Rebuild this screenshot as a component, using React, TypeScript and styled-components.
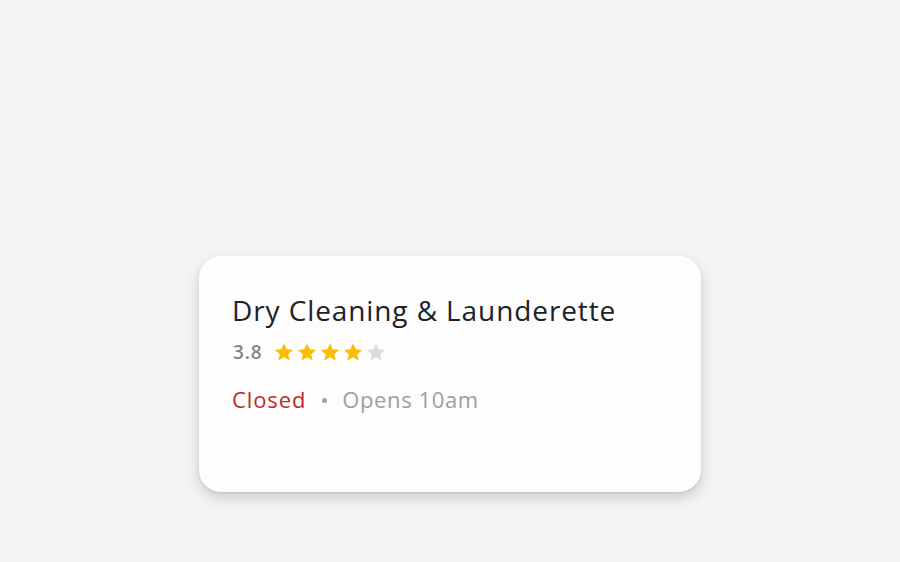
import React from 'react';
import styled, { createGlobalStyle } from 'styled-components';

const GlobalStyle = createGlobalStyle`
  html, body {
    margin: 0;
    background: #f4f4f4;
  }
`;

const Page = styled.main`
  width: 900px;
  height: 562px;
  box-sizing: border-box;
  padding: 256px 0 0 199px;
  font-family: "Open Sans", Roboto, sans-serif;
`;

const Card = styled.section`
  width: 502px;
  height: 236px;
  box-sizing: border-box;
  padding: 34px 33px;
  background: #fdfdfd;
  border-radius: 22px;
  box-shadow: 0 6px 14px rgba(0, 0, 0, 0.17), 0 1px 3px rgba(0, 0, 0, 0.08);
`;

const Title = styled.h1`
  margin: 0;
  font-size: 28px;
  font-weight: 400;
  line-height: 40px;
  letter-spacing: 0.9px;
  color: #202124;
`;

const RatingRow = styled.div`
  display: flex;
  align-items: center;
  gap: 11px;
  margin-top: 10px;
  height: 24px;
`;

const Score = styled.span`
  font-size: 19px;
  font-weight: 600;
  letter-spacing: 0.8px;
  color: #80868b;
  padding-left: 1px;
`;

const Stars = styled.div`
  display: flex;
  gap: 1px;
`;

const StatusRow = styled.div`
  display: flex;
  align-items: center;
  margin-top: 20px;
  font-size: 22px;
  line-height: 30px;
  letter-spacing: 0.6px;
`;

const Status = styled.span<{ $tone: 'closed' | 'muted' }>`
  color: ${p => (p.$tone === 'closed' ? '#bf2a25' : '#9aa0a6')};
  letter-spacing: ${p => (p.$tone === 'closed' ? '0.9px' : '0.6px')};
`;

const Dot = styled.span`
  width: 5px;
  height: 5px;
  border-radius: 50%;
  background: #9aa0a6;
  margin: 2px 15px 0 16px;
`;

const Star = ({ filled }: { filled: boolean }) => (
  <svg width="22" height="22" viewBox="0 0 24 24">
    <path
      d="M12 2.5l2.9 6.6 7.1.6-5.4 4.7 1.6 7-6.2-3.7-6.2 3.7 1.6-7L2 9.7l7.1-.6z"
      fill={filled ? '#fbbc04' : '#dadce0'}
    />
  </svg>
);

const App = () => (
  <>
    <GlobalStyle />
    <Page>
      <Card>
        <Title>Dry Cleaning &amp; Launderette</Title>
        <RatingRow>
          <Score>3.8</Score>
          <Stars>
            {[0, 1, 2, 3, 4].map(i => (
              <Star key={i} filled={i < 4} />
            ))}
          </Stars>
        </RatingRow>
        <StatusRow>
          <Status $tone="closed">Closed</Status>
          <Dot />
          <Status $tone="muted">Opens 10am</Status>
        </StatusRow>
      </Card>
    </Page>
  </>
);

export default App;
